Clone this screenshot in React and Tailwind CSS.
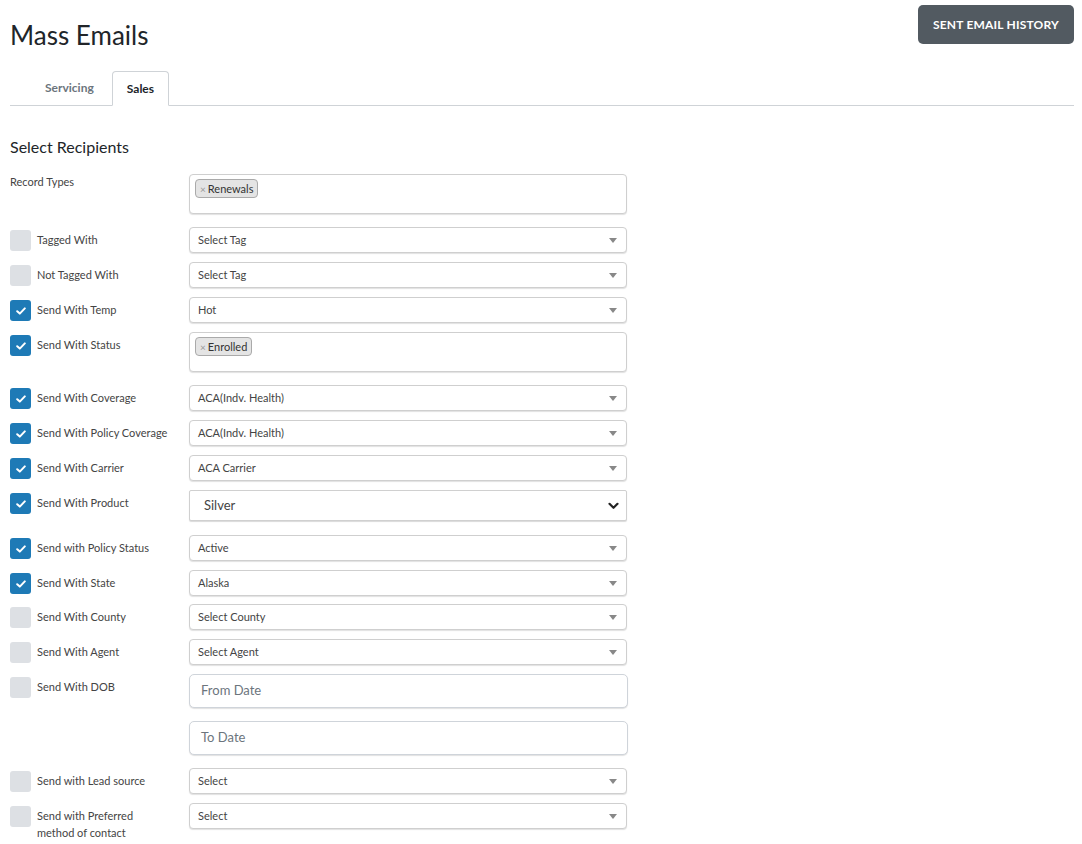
import React from "react";

const font = { fontFamily: "Lato, 'Source Sans Pro', 'Noto Sans', sans-serif" };

const Checkbox = ({ checked }) =>
  checked ? (
    <div className="mt-[3px] w-[21px] h-[21px] shrink-0 rounded-[3px] bg-[#1e7ab6] flex items-center justify-center">
      <svg width="10" height="8" viewBox="0 0 10 8" fill="none">
        <path d="M1.2 4.2 L3.8 6.6 L8.8 1.4" stroke="white" strokeWidth="2" strokeLinecap="round" strokeLinejoin="round" />
      </svg>
    </div>
  ) : (
    <div className="mt-[3px] w-[21px] h-[21px] shrink-0 rounded-[3px] bg-[#dde0e4]" />
  );

const Label = ({ text, checked, noBox }) => {
  if (noBox) {
    return (
      <div className="w-[179px] shrink-0 text-[11px] leading-[16px] text-[#444]">{text}</div>
    );
  }
  return (
    <div className="w-[179px] shrink-0 flex items-start">
      <Checkbox checked={checked} />
      <span className="ml-[6px] mt-[4px] w-[140px] whitespace-pre-line text-[11px] leading-[17px] text-[#444]">{text}</span>
    </div>
  );
};

const Select = ({ value }) => (
  <div className="w-[438px] h-[26px] border border-[#cfcfcf] rounded-[4px] bg-white shadow-[0_1px_1px_rgba(0,0,0,0.12)] flex items-center justify-between pl-[8px] pr-[9px]">
    <span className="text-[11px] text-[#444]">{value}</span>
    <span className="w-0 h-0 border-x-[4px] border-x-transparent border-t-[5px] border-t-[#888]" />
  </div>
);

const Multi = ({ tag }) => (
  <div className="w-[438px] h-[40px] border border-[#cfcfcf] rounded-[4px] bg-white shadow-[0_1px_1px_rgba(0,0,0,0.12)] px-[5px] pt-[4px] flex items-start">
    <span className="flex items-center h-[19px] px-[4px] bg-[#e4e4e4] border border-[#aaa] rounded-[4px] text-[11px] leading-none text-[#333]">
      <span className="text-[#999] text-[10px] mr-[2px]">×</span>
      {tag}
    </span>
  </div>
);

const NativeSelect = ({ value }) => (
  <div className="w-[438px] h-[31px] border border-[#d0d0d0] rounded-[2px] bg-white shadow-[0_1px_1px_rgba(0,0,0,0.15)] flex items-center justify-between pl-[14px] pr-[7px]">
    <span className="text-[13px] text-[#444]">{value}</span>
    <svg width="11" height="8" viewBox="0 0 11 8" fill="none">
      <path d="M1.5 1.8 L5.5 5.8 L9.5 1.8" stroke="#222" strokeWidth="2.2" strokeLinecap="round" strokeLinejoin="round" />
    </svg>
  </div>
);

const DateInput = ({ placeholder }) => (
  <div className="w-[439px] h-[34px] border border-[#cfd4da] rounded-[5px] bg-white shadow-[0_1px_1px_rgba(0,0,0,0.12)] flex items-center pl-[11px]">
    <span className="text-[13px] text-[#6c757d]">{placeholder}</span>
  </div>
);

const rows = [
  { label: "Record Types", noBox: true, kind: "multi", value: "Renewals", mb: "mb-[13px]" },
  { label: "Tagged With", kind: "select", value: "Select Tag", mb: "mb-[9px]" },
  { label: "Not Tagged With", kind: "select", value: "Select Tag", mb: "mb-[9px]" },
  { label: "Send With Temp", checked: true, kind: "select", value: "Hot", mb: "mb-[9px]" },
  { label: "Send With Status", checked: true, kind: "multi", value: "Enrolled", mb: "mb-[13px]" },
  { label: "Send With Coverage", checked: true, kind: "select", value: "ACA(Indv. Health)", mb: "mb-[9px]" },
  { label: "Send With Policy Coverage", checked: true, kind: "select", value: "ACA(Indv. Health)", mb: "mb-[9px]" },
  { label: "Send With Carrier", checked: true, kind: "select", value: "ACA Carrier", mb: "mb-[9px]" },
  { label: "Send With Product", checked: true, kind: "native", value: "Silver", mb: "mb-[14px]" },
  { label: "Send with Policy Status", checked: true, kind: "select", value: "Active", mb: "mb-[9px]" },
  { label: "Send With State", checked: true, kind: "select", value: "Alaska", mb: "mb-[8px]" },
  { label: "Send With County", kind: "select", value: "Select County", mb: "mb-[9px]" },
  { label: "Send With Agent", kind: "select", value: "Select Agent", mb: "mb-[9px]" },
  { label: "Send With DOB", kind: "date", value: "From Date", mb: "mb-[13px]" },
  { label: null, kind: "date", value: "To Date", mb: "mb-[13px]" },
  { label: "Send with Lead source", kind: "select", value: "Select", mb: "mb-[9px]" },
  { label: "Send with Preferred\nmethod of contact", kind: "select", value: "Select", mb: "mb-[9px]" },
];

export default function App() {
  return (
    <div className="min-h-screen bg-white pl-[10px] pr-[8px]" style={font}>
      <div className="flex justify-between items-start">
        <h1 className="mt-[19px] text-[26px] leading-[32px] text-[#212529]">Mass Emails</h1>
        <button className="mt-[5px] h-[39px] px-[15px] rounded-[5px] bg-[#525a61] text-white text-[12px] font-bold tracking-[0.2px]">
          SENT EMAIL HISTORY
        </button>
      </div>

      <div className="mt-[20px] flex border-b border-[#cfd3d7] h-[35px]">
        <div className="ml-[21px] px-[14px] flex items-center text-[12px] font-bold text-[#6c757d]">Servicing</div>
        <div className="ml-[4px] px-[14px] flex items-center text-[12px] font-bold text-[#212529] border border-[#cfd3d7] border-b-white rounded-t-[4px] bg-white -mb-px">
          Sales
        </div>
      </div>

      <h2 className="mt-[30px] text-[16px] leading-[22px] text-[#212529]">Select Recipients</h2>

      <div className="mt-[16px] flex flex-col">
        {rows.map((r, i) => (
          <div key={i} className={`flex items-start ${r.mb}`}>
            {r.label ? (
              <Label text={r.label} checked={r.checked} noBox={r.noBox} />
            ) : (
              <div className="w-[179px] shrink-0" />
            )}
            {r.kind === "multi" && <Multi tag={r.value} />}
            {r.kind === "select" && <Select value={r.value} />}
            {r.kind === "native" && <NativeSelect value={r.value} />}
            {r.kind === "date" && <DateInput placeholder={r.value} />}
          </div>
        ))}
      </div>
    </div>
  );
}
